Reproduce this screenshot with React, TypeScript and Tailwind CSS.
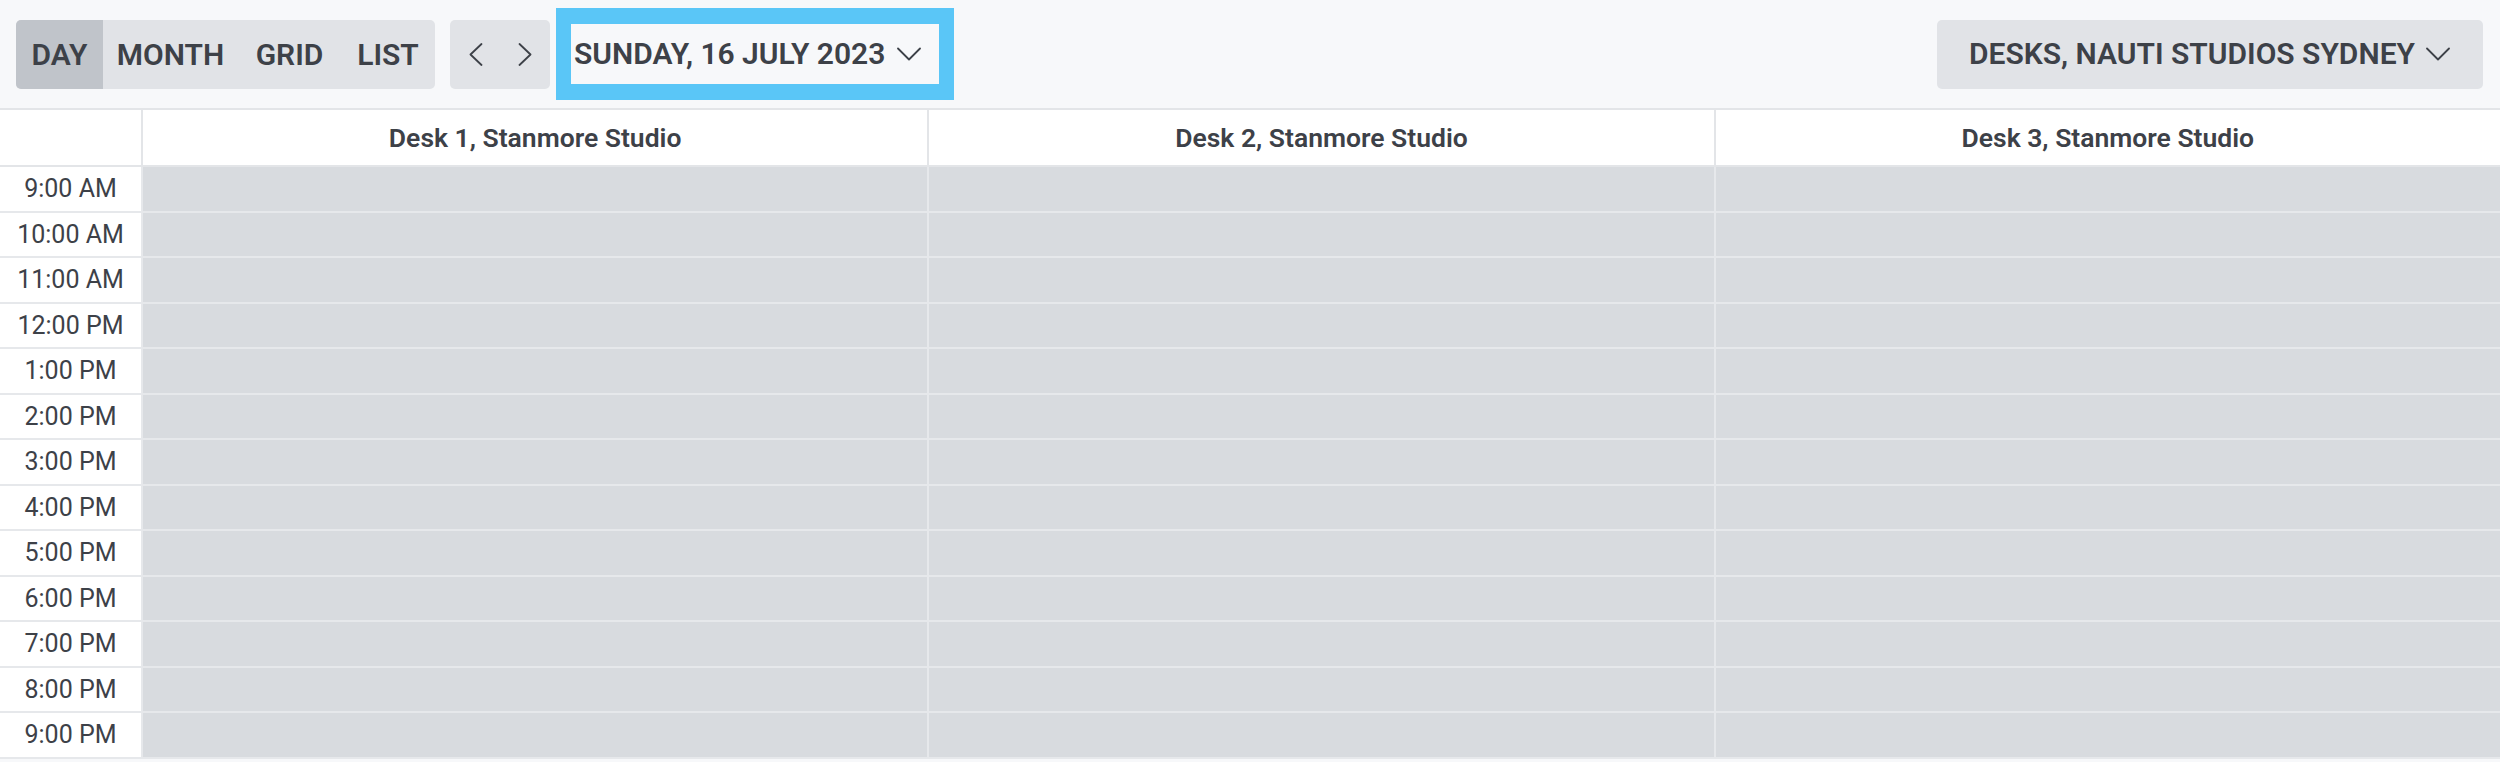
import React from "react";

const times = [
  "9:00 AM",
  "10:00 AM",
  "11:00 AM",
  "12:00 PM",
  "1:00 PM",
  "2:00 PM",
  "3:00 PM",
  "4:00 PM",
  "5:00 PM",
  "6:00 PM",
  "7:00 PM",
  "8:00 PM",
  "9:00 PM",
];

const desks = ["Desk 1, Stanmore Studio", "Desk 2, Stanmore Studio", "Desk 3, Stanmore Studio"];

function ChevronDown() {
  return (
    <svg width="24" height="14" viewBox="0 0 24 14" fill="none" className="shrink-0">
      <polyline points="1,1.5 12,12.5 23,1.5" stroke="#3d4148" strokeWidth="1.8" strokeLinecap="round" strokeLinejoin="round" />
    </svg>
  );
}

function ChevronLeft() {
  return (
    <svg width="14" height="23" viewBox="0 0 14 23" fill="none">
      <polyline points="12.5,1 1.5,11.5 12.5,22" stroke="#3d4148" strokeWidth="1.8" strokeLinecap="round" strokeLinejoin="round" />
    </svg>
  );
}

function ChevronRight() {
  return (
    <svg width="14" height="23" viewBox="0 0 14 23" fill="none">
      <polyline points="1.5,1 12.5,11.5 1.5,22" stroke="#3d4148" strokeWidth="1.8" strokeLinecap="round" strokeLinejoin="round" />
    </svg>
  );
}

export default function App() {
  return (
    <div className="w-[2500px] h-[762px] overflow-hidden bg-[#f7f8fa] font-['Roboto',sans-serif] text-[#3d4148]">
      {/* Toolbar */}
      <div className="h-[110px] border-b-2 border-[#e3e5e8] bg-[#f7f8fa] flex items-center pl-[16px] pr-[17px]">
        <div className="flex h-[69px] rounded-[5px] bg-[#e1e3e7] overflow-hidden text-[30px] font-semibold uppercase">
          <div className="w-[87px] flex items-center justify-center bg-[#c0c4ca]">Day</div>
          <div className="w-[135px] flex items-center justify-center">Month</div>
          <div className="w-[103px] flex items-center justify-center">Grid</div>
          <div className="w-[94px] flex items-center justify-center">List</div>
        </div>
        <div className="ml-[15px] flex h-[69px] w-[100px] rounded-[5px] bg-[#e1e3e7]">
          <div className="w-[50px] flex items-center justify-center pl-[2px]">
            <ChevronLeft />
          </div>
          <div className="w-[50px] flex items-center justify-center">
            <ChevronRight />
          </div>
        </div>
        <div className="ml-[6px] h-[92px] border-x-[15px] border-y-[16px] border-[#5ac6f7] bg-[#f7f8fa] flex items-center pl-[3px] pr-[18px]">
          <span className="text-[30px] font-semibold leading-none whitespace-nowrap">SUNDAY, 16 JULY 2023</span>
          <span className="ml-[12px] flex items-center">
            <ChevronDown />
          </span>
        </div>
        <div className="flex-1" />
        <div className="h-[69px] rounded-[5px] bg-[#e1e3e7] flex items-center pl-[32px] pr-[33px]">
          <span className="text-[30px] font-semibold leading-none whitespace-nowrap">DESKS, NAUTI STUDIOS SYDNEY</span>
          <span className="ml-[11px] flex items-center">
            <ChevronDown />
          </span>
        </div>
      </div>

      {/* Header row */}
      <div className="grid grid-cols-[141px_1fr_1fr_1fr] h-[57px] bg-white border-b-2 border-[#e3e5e8]">
        <div />
        {desks.map((d) => (
          <div
            key={d}
            className="border-l-2 border-[#e3e5e8] flex items-center justify-center text-[26.5px] font-semibold whitespace-nowrap"
          >
            {d}
          </div>
        ))}
      </div>

      {/* Time rows */}
      <div>
        {times.map((t) => (
          <div key={t} className="grid grid-cols-[141px_1fr_1fr_1fr] h-[45.5px] border-b-2 border-[#e6e8eb]">
            <div className="bg-white flex items-center justify-center text-[25px] whitespace-nowrap">{t}</div>
            <div className="bg-[#d8dbdf] border-l-2 border-[#e6e8eb]" />
            <div className="bg-[#d8dbdf] border-l-2 border-[#e6e8eb]" />
            <div className="bg-[#d8dbdf] border-l-2 border-[#e6e8eb]" />
          </div>
        ))}
      </div>
    </div>
  );
}
